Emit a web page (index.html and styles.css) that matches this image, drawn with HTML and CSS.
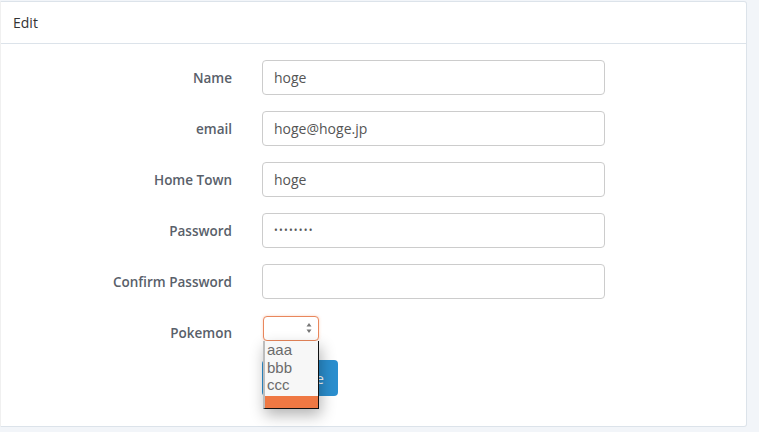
FILE: index.html
```html
<!DOCTYPE html>
<html>
<head>
<meta charset="utf-8">
<link rel="stylesheet" href="styles.css">
</head>
<body>
<div class="panel">
  <div class="panel-heading">Edit</div>
  <div class="panel-body">
    <form class="form">
      <div class="row">
        <label class="label">Name</label>
        <div class="input">hoge</div>
      </div>
      <div class="row">
        <label class="label">email</label>
        <div class="input">hoge@hoge.jp</div>
      </div>
      <div class="row">
        <label class="label">Home Town</label>
        <div class="input">hoge</div>
      </div>
      <div class="row">
        <label class="label">Password</label>
        <div class="input dots">••••••••</div>
      </div>
      <div class="row">
        <label class="label">Confirm Password</label>
        <div class="input"></div>
      </div>
      <div class="row row-select">
        <label class="label">Pokemon</label>
        <div class="select-wrap">
          <div class="select">
            <svg class="arrows" width="6" height="12" viewBox="0 0 6 12"><path d="M3 1 L5.5 4.5 H0.5 Z M3 11 L5.5 7.5 H0.5 Z" fill="#777"/></svg>
          </div>
          <div class="dropdown">
            <div class="opt">aaa</div>
            <div class="opt">bbb</div>
            <div class="opt">ccc</div>
            <div class="opt active"></div>
          </div>
        </div>
      </div>
      <div class="row row-btn">
        <span></span>
        <div><button type="button" class="btn">Update</button></div>
      </div>
    </form>
  </div>
</div>
</body>
</html>
```
FILE: styles.css
```css
html, body {
  margin: 0;
  padding: 0;
}
body {
  background: #f2f5f9;
  font-family: "Open Sans", "Liberation Sans", sans-serif;
  color: #555;
  width: 759px;
  height: 432px;
  overflow: hidden;
}
.panel {
  margin-top: 1px;
  width: 747px;
  height: 426px;
  box-sizing: border-box;
  background: #fff;
  border: 1px solid #dce3ea;
  border-left-color: #f0f0f0;
  border-radius: 0 3px 3px 0;
}
.panel-heading {
  height: 42px;
  box-sizing: border-box;
  padding: 11px 12px;
  font-size: 14px;
  line-height: 20px;
  color: #333;
  border-bottom: 1px solid #dce3ea;
}
.panel-body {
  padding-top: 16px;
}
.row {
  display: grid;
  grid-template-columns: 231px 343px;
  column-gap: 30px;
  margin-bottom: 16px;
}
.label {
  text-align: right;
  font-weight: 600;
  font-size: 13.5px;
  line-height: 33px;
  height: 35px;
  box-sizing: border-box;
  padding-top: 2px;
  color: #59606a;
}
.input {
  height: 35px;
  box-sizing: border-box;
  border: 1px solid #ccc;
  border-radius: 4px;
  padding: 0 11px;
  font-size: 14px;
  line-height: 33px;
  color: #555;
}
.dots {
  font-size: 10px;
  letter-spacing: 1.2px;
  color: #555;
}
.row-select {
  height: 35px;
  margin-bottom: 10px;
}
.select-wrap {
  position: relative;
  padding-top: 1px;
  padding-left: 1px;
}
.select {
  width: 56px;
  height: 25px;
  box-sizing: border-box;
  border: 1px solid #e9875c;
  border-radius: 4px;
  box-shadow: 0 0 3px rgba(239, 122, 69, 0.35);
  background: #fff;
  position: relative;
}
.arrows {
  position: absolute;
  right: 6px;
  top: 5px;
}
.dropdown {
  position: absolute;
  left: 1px;
  top: 26px;
  width: 56px;
  height: 68px;
  box-sizing: border-box;
  background: #f7f7f7;
  border-left: 2px solid #bdbdbd;
  border-right: 1px solid #111;
  border-bottom: 1px solid #111;
  box-shadow: 2px 6px 14px rgba(0, 0, 0, 0.3);
  overflow: hidden;
  z-index: 2;
  font-family: "Liberation Sans", Arial, sans-serif;
  font-size: 15px;
  color: #6b6b6b;
}
.opt {
  height: 17.5px;
  line-height: 17px;
  padding-left: 2px;
}
.opt.active {
  background: #ef7843;
  height: 14px;
  margin-top: 2px;
}
.row-btn {
  margin: 0;
}
.btn {
  display: block;
  height: 36px;
  width: 76px;
  box-sizing: border-box;
  border: 0;
  border-radius: 4px;
  background: #2b8fcf;
  color: #fff;
  font-family: "Open Sans", "Liberation Sans", sans-serif;
  font-size: 14px;
  padding: 0;
  text-align: center;
}
```
